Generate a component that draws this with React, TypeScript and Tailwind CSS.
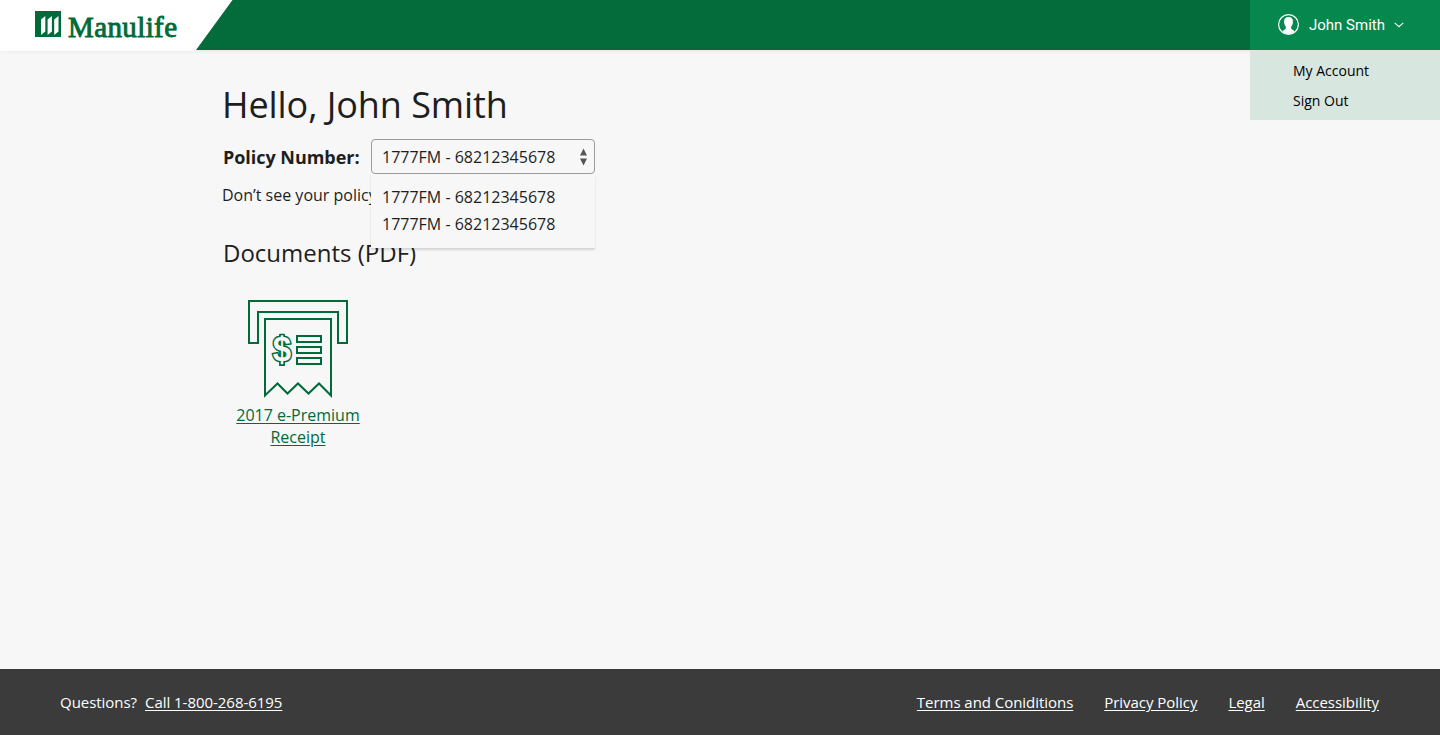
import React from "react";

const FOOTER_LINKS = ["Terms and Coniditions", "Privacy Policy", "Legal", "Accessibility"];
const POLICIES = ["1777FM - 68212345678", "1777FM - 68212345678"];

function Logo() {
  return (
    <svg width="233" height="51" viewBox="0 0 233 51" className="block shrink-0">
      <path d="M0 0H232.5L196 50V51H0Z" fill="#fff" />
      <rect x="35" y="11" width="26" height="26" fill="#006b3a" />
      <path d="M41 19.500 45.300 16V31.500L41 35ZM47.600 19.500 51.900 16V31.500L47.600 35ZM54.200 19.500 58.500 16V31.500L54.200 35Z" fill="#fff" />
      <text x="68" y="36.500" fontSize="29" fill="#006b3a" stroke="#006b3a" strokeWidth="0.900" textLength="109" className="font-['Liberation_Serif',serif]">
        Manulife
      </text>
    </svg>
  );
}

function UserIcon() {
  return (
    <svg width="22" height="22" viewBox="0 0 22 22" className="block">
      <circle cx="10.500" cy="10.500" r="9.900" fill="none" stroke="#fff" strokeWidth="1.200" />
      <path d="M10.500 3C7.500 3 6 4.600 6.100 7.400c0 1.900.4 3.600 1.700 5v2.100c-.3.900-1.800 1.400-3.300 2.600C6 19.100 8 20.100 10.500 20.100s4.500-1 6-3c-1.500-1.200-3-1.700-3.300-2.600v-2.100c1.300-1.400 1.700-3.100 1.700-5C15 4.600 13.500 3 10.500 3Z" fill="#fff" />
    </svg>
  );
}

function ReceiptIcon() {
  return (
    <svg width="100" height="100" viewBox="0 0 100 100" className="block" fill="none" stroke="#006b3a" strokeWidth="2">
      <path d="M1 1H99V43H90V12H10V43H1Z" />
      <path d="M17 19H83V95.500L71 83.500 60.500 93.500 50 83.500 39.500 93.500 29.500 83.500 17 95.500Z" />
      <text x="34" y="0" transform="translate(0 60.900) scale(1 1.080)" textAnchor="middle" fontSize="33" fontWeight="700" fill="#006b3a" strokeWidth="2.800" className="font-['Liberation_Sans',sans-serif]">
        $
      </text>
      <path d="M34 34V66" strokeWidth="5.800" />
      <path d="M34 35.700V39M34 61.500V64.300" stroke="#f7f7f7" strokeWidth="2.400" />
      <text x="34" y="0" transform="translate(0 60.900) scale(1 1.080)" textAnchor="middle" fontSize="33" fontWeight="700" fill="#f7f7f7" stroke="none" className="font-['Liberation_Sans',sans-serif]">
        $
      </text>
      <path d="M49 36H73V42H49ZM49 47H73V53H49ZM49 58H73V64H49Z" />
    </svg>
  );
}

export default function App() {
  return (
    <div className="flex h-[735px] w-full flex-col bg-[#f7f7f7] font-['Open_Sans',sans-serif] text-[#1e1e1e]">
      <header className="relative flex h-[50px] shrink-0 justify-between bg-[#046b3a] shadow-[0_1px_4px_rgba(0,0,0,0.08)]">
        <Logo />
        <div className="relative flex w-[190px] items-center bg-[#06874e] pl-[28px] text-white">
          <UserIcon />
          <span className="ml-[9px] font-['Roboto',sans-serif] text-[15px] leading-5">John Smith</span>
          <svg width="10" height="6" viewBox="0 0 10 6" className="ml-[9.500px]" fill="none" stroke="#fff" strokeWidth="1.100">
            <path d="M.7.800 5 4.700 9.300.800" />
          </svg>
          <nav className="absolute top-full left-0 flex h-[70px] w-[190px] flex-col bg-[#d7e6df] pt-[6px] pl-[43px] text-[14px] leading-[30px] text-black">
            <a>My Account</a>
            <a>Sign Out</a>
          </nav>
        </div>
      </header>

      <main className="flex flex-1 flex-col items-start pl-[222px]">
        <h1 className="mt-[29px] text-[36px] leading-[52px] tracking-[-0.08px]">Hello, John Smith</h1>
        <div className="mt-2 flex h-[35px] items-center">
          <label className="w-[149px] pl-px text-[18px] leading-6 font-bold tracking-[-0.04px]">Policy Number:</label>
          <div className="relative flex h-[35px] w-[224px] items-center justify-between rounded-[4px] border border-[#9b9b9b] pr-[6px] pl-[10px] text-[16px]">
            <span>{POLICIES[0]}</span>
            <svg width="9" height="18" viewBox="0 0 9 18" fill="#555">
              <path d="M4.500.500 8 7.500H1ZM4.500 17.500 8 10.500H1Z" />
            </svg>
            <div className="absolute top-[34px] -left-px z-10 h-[74px] w-[224px] bg-[#f7f7f7] pt-[10px] pl-[11px] leading-[27px] shadow-[0_2px_2px_rgba(0,0,0,0.14)]">
              {POLICIES.map((p, i) => (
                <div key={i}>{p}</div>
              ))}
            </div>
          </div>
        </div>
        <p className="mt-[9px] text-[16px] leading-6">Don’t see your policy</p>
        <h2 className="mt-[30px] pl-px text-[24px] leading-8">Documents (PDF)</h2>
        <a className="mt-[31px] flex w-[152px] flex-col items-center text-[#006b3a]">
          <ReceiptIcon />
          <span className="mt-1 w-[130px] text-center text-[16px] leading-[22px] underline underline-offset-2">2017 e-Premium Receipt</span>
        </a>
      </main>

      <footer className="flex h-[66px] shrink-0 items-center justify-between bg-[#3b3b3b] pr-[61px] pl-[60px] text-[15px] tracking-[-0.04px] text-white">
        <div className="flex gap-2">
          <span>Questions?</span>
          <a className="underline underline-offset-2">Call 1-800-268-6195</a>
        </div>
        <nav className="flex gap-[31px]">
          {FOOTER_LINKS.map((l) => (
            <a key={l} className="underline underline-offset-2">{l}</a>
          ))}
        </nav>
      </footer>
    </div>
  );
}
